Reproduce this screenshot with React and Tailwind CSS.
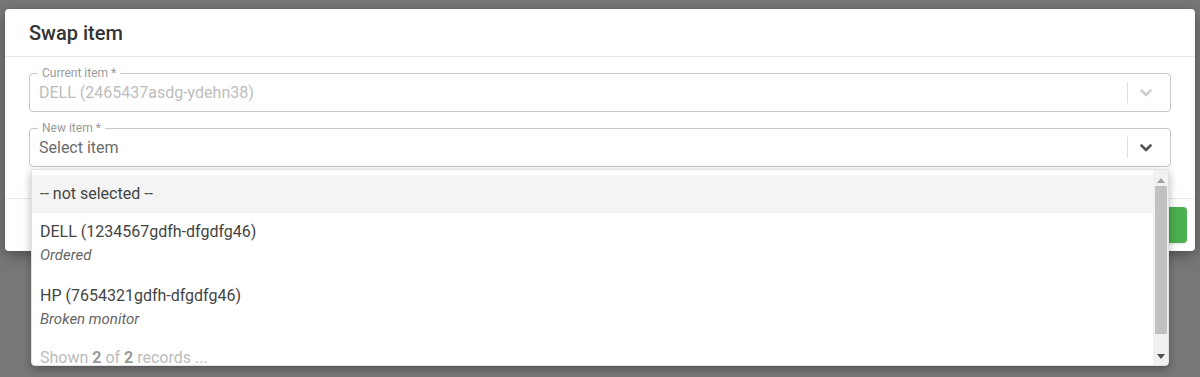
import React from 'react';

const Chevron = ({ className }) => (
  <svg width="12" height="8" viewBox="0 0 12 8" className={className}>
    <polyline points="1.5,1.5 6,6 10.5,1.5" fill="none" stroke="currentColor" strokeWidth="2.6" strokeLinecap="round" strokeLinejoin="round" />
  </svg>
);

const SelectField = ({ label, value, disabled, children }) => (
  <div className="relative h-[39px] rounded border border-[#c8c8c8] flex items-center">
    {/* floating label on the border */}
    <span className="absolute -top-[9px] left-[8px] bg-white px-1 text-[12px] leading-[16px] text-[#9a9a9a]">
      {label}
    </span>
    <div className={`flex-1 pl-[9px] text-[16px] ${disabled ? 'text-[#bdbdbd]' : 'text-[#6b6b6b]'}`}>{value}</div>
    <div className="h-[21px] w-px bg-[#dcdcdc]" />
    <div className={`w-[42px] flex justify-center pr-[6px] ${disabled ? 'text-[#cfcfcf]' : 'text-[#555]'}`}>
      <Chevron />
    </div>
    {children}
  </div>
);

const options = [
  { name: 'DELL (1234567gdfh-dfgdfg46)', note: 'Ordered' },
  { name: 'HP (7654321gdfh-dfgdfg46)', note: 'Broken monitor' },
];

export default function App() {
  return (
    <div className="h-[377px] overflow-hidden bg-[#777777] px-[5px] pt-[9px] font-['Roboto',sans-serif]">
      <div className="bg-white rounded shadow-[0_4px_14px_rgba(0,0,0,0.35)]">
        {/* Header */}
        <div className="h-12 flex items-center px-6 border-b border-[#e9e9e9]">
          <h2 className="text-[20px] font-medium text-[#333]">Swap item</h2>
        </div>

        {/* Body */}
        <div className="px-6 pt-4 pb-[31px] flex flex-col gap-4">
          <SelectField label="Current item *" value="DELL (2465437asdg-ydehn38)" disabled />
          <SelectField label="New item *" value="Select item">
            {/* Open dropdown */}
            <div className="absolute left-px right-px top-[calc(100%+3px)] h-[197px] z-10 bg-white rounded-b border border-[#e2e2e2] shadow-[0_3px_8px_rgba(0,0,0,0.3)] flex overflow-hidden">
              <div className="flex-1 pt-[5px] overflow-hidden">
                <div className="h-[38px] flex items-center pl-[8px] bg-[#f4f4f4] text-[16px] text-[#444]">
                  -- not selected --
                </div>
                {options.map((o) => (
                  <div key={o.name} className="pl-[8px] pt-2 pb-[10px]">
                    <div className="text-[16px] leading-[22px] text-[#444]">{o.name}</div>
                    <div className="text-[15px] leading-[24px] italic text-[#666]">{o.note}</div>
                  </div>
                ))}
                <div className="pl-[8px] pt-[6px] text-[16px] leading-[22px] text-[#bbb]">
                  Shown <span className="font-bold text-[#999]">2</span> of <span className="font-bold text-[#999]">2</span> records ...
                </div>
              </div>
              {/* scrollbar */}
              <div className="w-[15px] bg-[#f1f1f1] flex flex-col items-center">
                <div className="h-[16px] flex items-end justify-center pb-[3px]">
                  <svg width="8" height="5" viewBox="0 0 8 5"><polygon points="0,5 4,0 8,5" fill="#a3a3a3" /></svg>
                </div>
                <div className="w-[12px] h-[148px] bg-[#c1c1c1]" />
                <div className="flex-1 flex items-end justify-center pb-[6px]">
                  <svg width="8" height="5" viewBox="0 0 8 5"><polygon points="0,0 8,0 4,5" fill="#505050" /></svg>
                </div>
              </div>
            </div>
          </SelectField>
        </div>

        {/* Footer */}
        <div className="border-t border-[#e9e9e9] flex justify-end p-2">
          <button className="h-9 px-5 rounded bg-[#4caf50] text-white text-[14px] font-medium shadow">
            Swap
          </button>
        </div>
      </div>
    </div>
  );
}
